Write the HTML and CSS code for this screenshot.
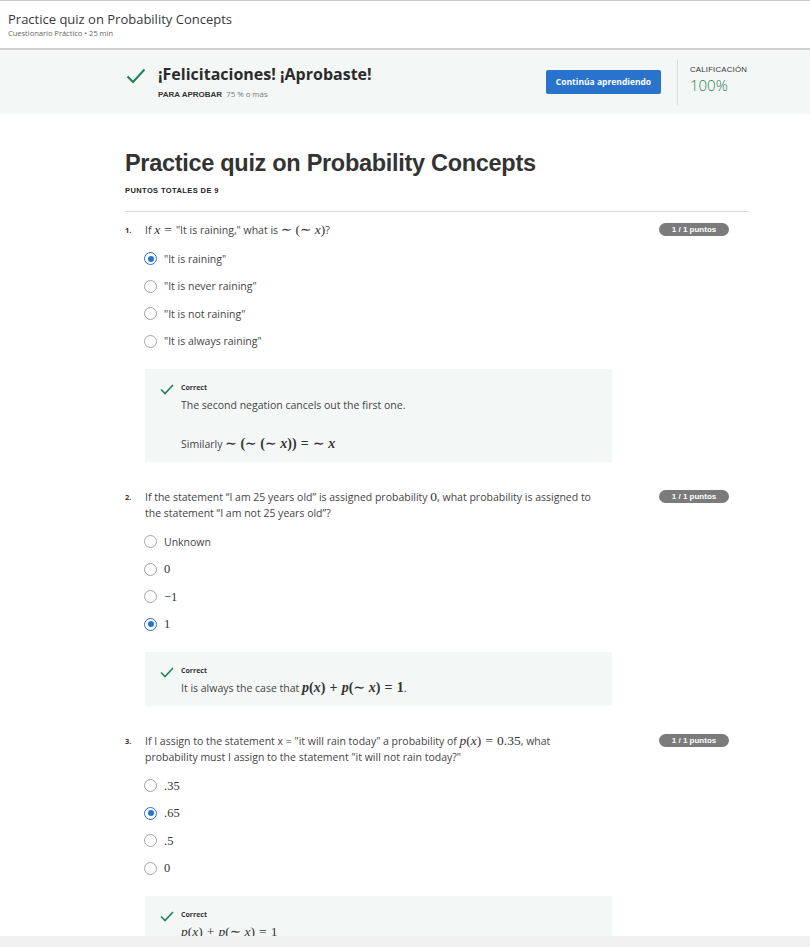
FILE: index.html
```html
<!DOCTYPE html>
<html lang="es">
<head>
<meta charset="utf-8">
<title>Practice quiz on Probability Concepts</title>
<link rel="stylesheet" href="styles.css">
</head>
<body>
<header class="topbar">
  <div class="topbar-title">Practice quiz on Probability Concepts</div>
  <div class="topbar-sub">Cuestionario Práctico • 25 min</div>
</header>

<section class="banner">
  <div class="banner-inner">
    <svg class="banner-check" viewBox="0 0 20 16" width="20" height="16"><path d="M1.5 8.5 L7 14 L18.5 1.5" fill="none" stroke="#1f8354" stroke-width="2"/></svg>
    <div class="banner-text">
      <div class="banner-title">¡Felicitaciones! ¡Aprobaste!</div>
      <div class="banner-sub"><span class="banner-sub-label">PARA APROBAR</span> <span class="banner-sub-val">75 % o más</span></div>
    </div>
    <button class="btn">Continúa aprendiendo</button>
    <div class="divider"></div>
    <div class="grade">
      <div class="grade-label">CALIFICACIÓN</div>
      <div class="grade-val">100%</div>
    </div>
  </div>
</section>

<main class="content">
  <h1 class="quiz-title">Practice quiz on Probability Concepts</h1>
  <div class="total">PUNTOS TOTALES DE 9</div>
  <hr class="rule">

  <div class="question">
    <div class="qnum">1.</div>
    <div class="qbody">
      <div class="qtext">If <span class="m"><i>x</i><span class="op">=</span></span>"It is raining," what is <span class="m">∼ (∼ <i>x</i>)</span>?</div>
      <div class="options">
        <div class="opt"><span class="radio on"></span><span>"It is raining"</span></div>
        <div class="opt"><span class="radio"></span><span>"It is never raining"</span></div>
        <div class="opt"><span class="radio"></span><span>"It is not raining"</span></div>
        <div class="opt"><span class="radio"></span><span>"It is always raining"</span></div>
      </div>
      <div class="feedback">
        <svg class="fb-check" viewBox="0 0 14 11" width="14" height="11"><path d="M1 5.5 L5 9.5 L13 1" fill="none" stroke="#1f8354" stroke-width="1.6"/></svg>
        <div class="fb-body">
          <div class="fb-label">Correct</div>
          <p class="fb-text">The second negation cancels out the first one.</p>
          <p class="fb-text fb-gap">Similarly <span class="m b">∼ (∼ (∼ <i>x</i>))<span class="op">=</span>∼ <i>x</i></span></p>
        </div>
      </div>
    </div>
    <div class="badge">1 / 1 puntos</div>
  </div>

  <div class="question">
    <div class="qnum">2.</div>
    <div class="qbody">
      <div class="qtext">If the statement “I am 25 years old” is assigned probability <span class="m">0</span>, what probability is assigned to the statement “I am not 25 years old”?</div>
      <div class="options">
        <div class="opt"><span class="radio"></span><span>Unknown</span></div>
        <div class="opt"><span class="radio"></span><span class="m opt-m">0</span></div>
        <div class="opt"><span class="radio"></span><span class="m opt-m">−1</span></div>
        <div class="opt"><span class="radio on"></span><span class="m opt-m">1</span></div>
      </div>
      <div class="feedback">
        <svg class="fb-check" viewBox="0 0 14 11" width="14" height="11"><path d="M1 5.5 L5 9.5 L13 1" fill="none" stroke="#1f8354" stroke-width="1.6"/></svg>
        <div class="fb-body">
          <div class="fb-label">Correct</div>
          <p class="fb-text">It is always the case that <span class="m b"><i>p</i>(<i>x</i>)<span class="op">+</span><i>p</i>(∼ <i>x</i>)<span class="op">=</span>1</span>.</p>
        </div>
      </div>
    </div>
    <div class="badge">1 / 1 puntos</div>
  </div>

  <div class="question">
    <div class="qnum">3.</div>
    <div class="qbody">
      <div class="qtext">If I assign to the statement x = "it will rain today" a probability of <span class="m"><i>p</i>(<i>x</i>)<span class="op">=</span>0.35</span>, what probability must I assign to the statement "it will not rain today?"</div>
      <div class="options">
        <div class="opt"><span class="radio"></span><span class="m opt-m">.35</span></div>
        <div class="opt"><span class="radio on"></span><span class="m opt-m">.65</span></div>
        <div class="opt"><span class="radio"></span><span class="m opt-m">.5</span></div>
        <div class="opt"><span class="radio"></span><span class="m opt-m">0</span></div>
      </div>
      <div class="feedback">
        <svg class="fb-check" viewBox="0 0 14 11" width="14" height="11"><path d="M1 5.5 L5 9.5 L13 1" fill="none" stroke="#1f8354" stroke-width="1.6"/></svg>
        <div class="fb-body">
          <div class="fb-label">Correct</div>
          <p class="fb-text"><span class="m"><i>p</i>(<i>x</i>)<span class="op">+</span><i>p</i>(∼ <i>x</i>)<span class="op">=</span>1</span></p>
          <p class="fb-text fb-gap">&nbsp;</p>
        </div>
      </div>
    </div>
    <div class="badge">1 / 1 puntos</div>
  </div>
</main>
<div class="hscroll"></div>
</body>
</html>
```

FILE: styles.css
```css
* { box-sizing: border-box; }
html, body { margin: 0; padding: 0; }
body {
  font-family: "Open Sans", "Liberation Sans", sans-serif;
  color: #333;
  background: #fff;
  overflow: hidden;
}

.topbar {
  border-top: 1px solid #c8c8c8;
  border-bottom: 2px solid #cfcfcf;
  height: 50px;
  padding: 10px 8px 0;
}
.topbar-title { font-size: 13px; line-height: 17px; color: #373a3c; }
.topbar-sub { font-size: 7.5px; line-height: 11px; color: #666; }

.banner { background: #f3f8f6; height: 64px; }
.banner-inner {
  margin-left: 126px;
  width: 624px;
  height: 64px;
  display: flex;
  align-items: center;
}
.banner-check { flex: none; margin-top: -12px; }
.banner-text { margin-left: 12px; flex: 1; }
.banner-title { font-size: 16px; font-weight: 700; line-height: 22px; color: #2b2b2b; }
.banner-sub { font-size: 8px; line-height: 12px; margin-top: 3px; }
.banner-sub-label { font-family: "Liberation Sans", sans-serif; font-weight: 700; color: #333; font-size: 8px; }
.banner-sub-val { color: #777; margin-left: 2px; font-size: 7.8px; }
.btn {
  flex: none;
  width: 115px;
  height: 24px;
  background: #2a73cc;
  color: #fff;
  border: 0;
  border-radius: 2px;
  font-family: "Open Sans", sans-serif;
  font-size: 8.5px;
  font-weight: 700;
  padding: 0;
  margin-top: -1px;
}
.divider { flex: none; width: 1px; height: 45px; background: #d9dedc; margin: 0 12px 0 16px; }
.grade { flex: none; width: 60px; margin-top: -6px; }
.grade-label { font-family: "Liberation Sans", sans-serif; font-size: 7.8px; line-height: 10px; color: #333; letter-spacing: 0.2px; }
.grade-val { font-size: 15px; line-height: 18px; color: #1f8354; margin-top: 1px; font-weight: 300; }

.content { margin-left: 125px; width: 624px; padding-top: 35px; }
.quiz-title {
  font-family: "Liberation Sans", Arial, sans-serif;
  font-weight: 700;
  font-size: 23.5px;
  line-height: 28px;
  margin: 0;
  color: #333;
  letter-spacing: -0.3px;
}
.total { font-family: "Liberation Sans", sans-serif; font-weight: 700; font-size: 7.5px; line-height: 10px; margin-top: 9px; color: #222; letter-spacing: 0.4px; }
.rule { border: 0; border-top: 1px solid #dcdcdc; margin: 15px 0 0; }

.question { display: flex; align-items: flex-start; padding-top: 10px; margin-bottom: 17px; }
.qnum { width: 20px; flex: none; font-size: 7.5px; font-weight: 700; line-height: 16px; color: #333; }
.qbody { width: 467px; flex: none; }
.qtext { font-size: 10.5px; line-height: 16px; color: #444; max-width: 458px; }
.badge {
  margin-left: auto;
  margin-right: 20px;
  margin-top: 1px;
  width: 70px;
  height: 13px;
  border-radius: 7px;
  background: #7b7b7b;
  color: #fff;
  font-family: "Liberation Sans", sans-serif;
  font-size: 8px;
  font-weight: 700;
  line-height: 13px;
  text-align: center;
}

.options { margin-top: 7px; }
.opt { display: flex; align-items: center; height: 27.5px; font-size: 10.5px; color: #444; }
.radio {
  flex: none;
  width: 13px;
  height: 13px;
  border-radius: 50%;
  border: 1px solid #a5a5a5;
  margin: 0 7px 0 -1px;
  background: #fff;
  display: flex;
  align-items: center;
  justify-content: center;
}
.radio.on { border: 1.5px solid #2a73cc; }
.radio.on::after { content: ""; width: 6px; height: 6px; border-radius: 50%; background: #2a73cc; }

.m { font-family: "Liberation Serif", "DejaVu Serif", serif; font-size: 13.5px; line-height: 1; color: #333; }
.m i { font-style: italic; }
.m.b { font-weight: 700; font-size: 14px; }
.m.opt-m { font-size: 12.5px; }
.op { margin: 0 0.3em; }

.feedback {
  margin-top: 14px;
  background: #f3f8f6;
  display: flex;
  align-items: flex-start;
  padding: 14px 12px 9px 15px;
}
.fb-check { flex: none; margin-top: 1px; }
.fb-body { margin-left: 7px; }
.fb-label { font-size: 7px; font-weight: 700; line-height: 10px; color: #333; }
.fb-text { margin: 0; font-size: 10.5px; line-height: 17px; margin-top: 4px; color: #444; }
.fb-gap { margin-top: 22px; }

.hscroll { position: fixed; left: 0; right: 0; bottom: 0; height: 11px; background: #f0f0f0; }
```
